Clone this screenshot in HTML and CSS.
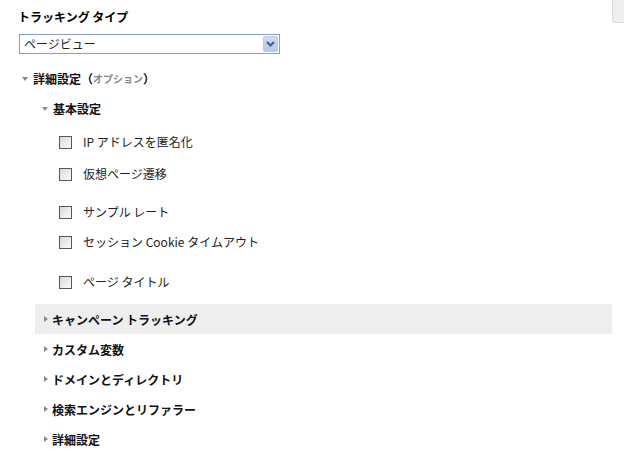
FILE: index.html
```html
<!DOCTYPE html>
<html lang="ja">
<head>
<meta charset="utf-8">
<link rel="stylesheet" href="styles.css">
</head>
<body>
<div class="corner"></div>
<div class="page">
  <h1 class="title">トラッキング タイプ</h1>
  <div class="select">
    <span class="select-text">ページビュー</span>
    <span class="select-btn">
      <svg width="9" height="6" viewBox="0 0 9 6"><path d="M1 1 L4.5 4.5 L8 1" fill="none" stroke="#4a5a7a" stroke-width="2"/></svg>
    </span>
  </div>

  <div class="section-head">
    <span class="tri-down"></span>
    <span class="bold">詳細設定</span><span class="paren">（</span><span class="opt">オプション</span><span class="paren">）</span>
  </div>

  <div class="sub-head">
    <span class="tri-down"></span>
    <span class="bold">基本設定</span>
  </div>

  <div class="check-row r1"><span class="box"></span><span>IP アドレスを匿名化</span></div>
  <div class="check-row r2"><span class="box"></span><span>仮想ページ遷移</span></div>
  <div class="check-row r3"><span class="box"></span><span>サンプル レート</span></div>
  <div class="check-row r4"><span class="box"></span><span>セッション Cookie タイムアウト</span></div>
  <div class="check-row r5"><span class="box"></span><span>ページ タイトル</span></div>

  <div class="collapsed">
    <div class="crow active"><span class="tri-right"></span><span>キャンペーン トラッキング</span></div>
    <div class="crow"><span class="tri-right"></span><span>カスタム変数</span></div>
    <div class="crow"><span class="tri-right"></span><span>ドメインとディレクトリ</span></div>
    <div class="crow"><span class="tri-right"></span><span>検索エンジンとリファラー</span></div>
    <div class="crow"><span class="tri-right"></span><span>詳細設定</span></div>
  </div>
</div>
</body>
</html>
```

FILE: styles.css
```css
html, body {
  margin: 0;
  padding: 0;
  background: #fff;
}
body {
  font-family: "Noto Sans CJK JP", "Liberation Sans", sans-serif;
  font-size: 12px;
  color: #111;
  width: 624px;
  height: 460px;
  overflow: hidden;
  position: relative;
}
.corner {
  position: absolute;
  top: 0;
  right: 0;
  width: 11px;
  height: 22px;
  background: #eeeeee;
  border-left: 1px solid #dcdcdc;
  border-bottom: 1px solid #dcdcdc;
  border-bottom-left-radius: 3px;
}
.page {
  padding-top: 9px;
  display: flex;
  flex-direction: column;
}
.title {
  margin: 0 0 0 18px;
  font-size: 12px;
  font-weight: bold;
  line-height: 16px;
  color: #000;
}
.select {
  margin: 9px 0 0 19px;
  width: 261px;
  height: 20px;
  box-sizing: border-box;
  border: 1px solid #8aa0bd;
  display: flex;
  align-items: center;
  justify-content: space-between;
  padding: 0 1px 0 4px;
}
.select-text {
  font-size: 12px;
  line-height: 16px;
  color: #222;
}
.select-btn {
  width: 15px;
  height: 16px;
  background: linear-gradient(#cddafb, #b3c6f3);
  border: 1px solid #b8c9ee;
  box-sizing: border-box;
  border-radius: 2px;
  display: flex;
  align-items: center;
  justify-content: center;
}
.section-head, .sub-head {
  display: flex;
  align-items: center;
  height: 16px;
  line-height: 16px;
}
.section-head {
  margin-top: 17px;
  padding-left: 22px;
}
.sub-head {
  margin-top: 14px;
  padding-left: 42px;
}
.bold {
  font-weight: bold;
  color: #111;
}
.paren {
  font-weight: bold;
  color: #111;
}
.opt {
  font-size: 10px;
  font-weight: bold;
  color: #888;
}
.tri-down {
  width: 0;
  height: 0;
  border-left: 3.5px solid transparent;
  border-right: 3.5px solid transparent;
  border-top: 4px solid #8a8a8a;
  margin-right: 5px;
}
.tri-right {
  width: 0;
  height: 0;
  border-top: 3.5px solid transparent;
  border-bottom: 3.5px solid transparent;
  border-left: 4px solid #8a8a8a;
  margin-right: 4px;
}
.check-row {
  display: flex;
  align-items: center;
  height: 16px;
  line-height: 16px;
  padding-left: 59px;
  color: #222;
}
.r1 { margin-top: 17px; }
.r2 { margin-top: 16px; }
.r3 { margin-top: 22px; }
.r4 { margin-top: 14px; }
.r5 { margin-top: 24px; }
.box {
  width: 13px;
  height: 13px;
  box-sizing: border-box;
  border: 1px solid #4f5a66;
  background: linear-gradient(135deg, #d9d9d3 0%, #eeeeea 60%, #fafafa 100%);
  margin-right: 11px;
}
.collapsed {
  margin-top: 14px;
  display: flex;
  flex-direction: column;
}
.crow {
  margin-left: 35px;
  width: 577px;
  height: 30px;
  display: flex;
  align-items: center;
  padding-left: 9px;
  box-sizing: border-box;
  font-weight: bold;
  color: #111;
}
.crow.active {
  background: #eeeeee;
}
```
